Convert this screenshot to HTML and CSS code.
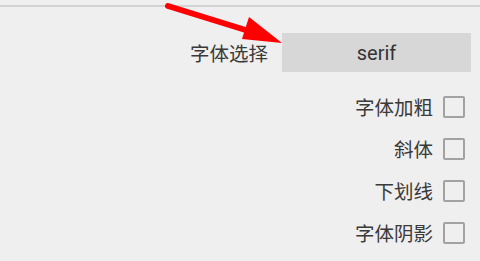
FILE: index.html
```html
<!DOCTYPE html>
<html>
<head>
<meta charset="utf-8">
<link rel="stylesheet" href="styles.css">
</head>
<body>
<div class="rule"></div>
<div class="form">
  <div class="row select-row">
    <span class="label">字体选择</span>
    <div class="select">serif</div>
  </div>
  <div class="checks">
    <label class="row check-row"><span class="label">字体加粗</span><span class="box"></span></label>
    <label class="row check-row"><span class="label">斜体</span><span class="box"></span></label>
    <label class="row check-row"><span class="label">下划线</span><span class="box"></span></label>
    <label class="row check-row"><span class="label">字体阴影</span><span class="box"></span></label>
  </div>
</div>
<svg class="arrow" width="480" height="261" viewBox="0 0 480 261">
  <line x1="168" y1="6" x2="252" y2="32" stroke="#ff0000" stroke-width="6" stroke-linecap="round"/>
  <polygon points="282,43 242,39 249,17" fill="#ff0000"/>
</svg>
</body>
</html>
```
FILE: styles.css
```css
html, body {
  margin: 0;
  padding: 0;
}
body {
  width: 480px;
  height: 261px;
  background: #efefef;
  position: relative;
  overflow: hidden;
  font-family: "Noto Sans CJK SC", "Noto Sans", sans-serif;
  color: #3a3a3a;
}
.rule {
  margin-top: 5px;
  height: 2px;
  background: #d2d2d2;
}
.form {
  padding-top: 26px;
  display: flex;
  flex-direction: column;
}
.row {
  display: flex;
  justify-content: flex-end;
  align-items: center;
}
.select-row {
  padding-right: 9px;
  gap: 14px;
  height: 39px;
}
.label {
  font-size: 19.5px;
  line-height: 1;
}
.select {
  width: 189px;
  height: 39px;
  background: #d7d7d7;
  display: flex;
  align-items: center;
  justify-content: center;
  font-family: Roboto, "Liberation Sans", sans-serif;
  font-size: 20px;
  color: #333;
}
.checks {
  margin-top: 14px;
  display: flex;
  flex-direction: column;
}
.check-row {
  height: 42px;
  padding-right: 15px;
  gap: 10px;
}
.box {
  width: 18px;
  height: 18px;
  border: 2px solid #a2a2a2;
  border-radius: 2px;
}
.arrow {
  position: absolute;
  left: 0;
  top: 0;
}
```
